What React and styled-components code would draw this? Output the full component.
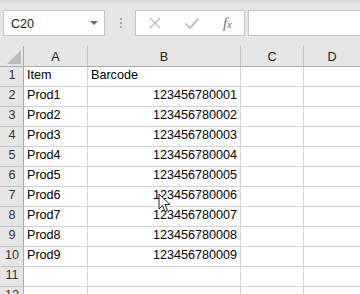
import React from 'react';
import styled, { createGlobalStyle } from 'styled-components';

const GlobalStyle = createGlobalStyle`
  html, body {
    margin: 0;
    padding: 0;
    background: #e6e6e6;
    overflow: hidden;
  }
`;

const rows = [
  ['Item', 'Barcode'],
  ['Prod1', '123456780001'],
  ['Prod2', '123456780002'],
  ['Prod3', '123456780003'],
  ['Prod4', '123456780004'],
  ['Prod5', '123456780005'],
  ['Prod6', '123456780006'],
  ['Prod7', '123456780007'],
  ['Prod8', '123456780008'],
  ['Prod9', '123456780009'],
  ['', ''],
  ['', ''],
];

const Sheet = () => {
  return (
    <Wrapper>
      <GlobalStyle />
      <FormulaBar>
        <NameBox>
          <span>C20</span>
          <Caret />
        </NameBox>
        <Grip>
          <i />
          <i />
          <i />
        </Grip>
        <FxButtons>
          <svg width="14" height="14" viewBox="0 0 14 14">
            <path d="M2 2 L12 12 M12 2 L2 12" stroke="#c3c3c3" strokeWidth="1.6" fill="none" />
          </svg>
          <svg width="16" height="14" viewBox="0 0 16 14">
            <path d="M1.5 7.5 L6 12 L14.5 2.5" stroke="#c3c3c3" strokeWidth="2" fill="none" />
          </svg>
          <Fx>
            f<sub>x</sub>
          </Fx>
        </FxButtons>
        <FormulaInput />
      </FormulaBar>

      <Grid>
        <Corner>
          <svg width="14" height="14" viewBox="0 0 14 14">
            <path d="M14 0 L14 14 L0 14 Z" fill="#bcbcbc" />
          </svg>
        </Corner>
        {['A', 'B', 'C', 'D'].map((c) => (
          <ColHead key={c} $last={c === 'D'}>{c}</ColHead>
        ))}
        {rows.map((r, i) => (
          <React.Fragment key={i}>
            <RowHead>{i + 1}</RowHead>
            <Cell>{r[0]}</Cell>
            <Cell $right={i > 0}>{r[1]}</Cell>
            <Cell />
            <Cell $last />
          </React.Fragment>
        ))}
      </Grid>

      <Pointer width="14" height="21" viewBox="0 0 14 21">
        <path
          d="M1 1 L1 16 L4.5 12.5 L7 18.5 L9.5 17.5 L7 11.5 L12 11.5 Z"
          fill="#fff"
          stroke="#222"
          strokeWidth="1"
          strokeLinejoin="round"
        />
      </Pointer>
    </Wrapper>
  );
};

const Wrapper = styled.div`
  position: relative;
  width: 360px;
  height: 294px;
  overflow: hidden;
  background: #e6e6e6;
  font-family: "Liberation Sans", Arial, sans-serif;
`;

const FormulaBar = styled.div`
  display: flex;
  align-items: stretch;
  height: 26px;
  padding: 10px 0 10px 3px;
  background: linear-gradient(#d8d8d8 0, #e6e6e6 4px);
`;

const NameBox = styled.div`
  box-sizing: border-box;
  width: 102px;
  display: flex;
  align-items: center;
  justify-content: space-between;
  padding: 0 6px 0 7px;
  background: #fff;
  border: 1px solid #c6c6c6;
  font-size: 12.6px;
  color: #222;
  span {
    padding-top: 1px;
  }
`;

const Caret = styled.div`
  width: 0;
  height: 0;
  border-left: 4px solid transparent;
  border-right: 4px solid transparent;
  border-top: 4px solid #6d6d6d;
`;

const Grip = styled.div`
  width: 30px;
  display: flex;
  flex-direction: column;
  align-items: center;
  justify-content: center;
  gap: 2px;
  padding-bottom: 1px;
  i {
    display: block;
    width: 2px;
    height: 2px;
    background: #a9a9a9;
    margin-left: 1px;
  }
`;

const FxButtons = styled.div`
  box-sizing: border-box;
  width: 110px;
  display: flex;
  align-items: center;
  justify-content: space-between;
  padding: 0 12px 0 12px;
  background: #fff;
  border: 1px solid #c6c6c6;
`;

const Fx = styled.span`
  font-family: "Liberation Serif", "Times New Roman", serif;
  font-style: italic;
  font-size: 15px;
  color: #6f6f6f;
  sub {
    font-size: 11px;
    vertical-align: 0;
    margin-left: 0;
  }
`;

const FormulaInput = styled.div`
  flex: 1;
  margin-left: 3px;
  background: #fff;
  border: 1px solid #c6c6c6;
  border-right: none;
`;

const Grid = styled.div`
  display: grid;
  grid-template-columns: 24px 64px 153px 63px 1fr;
  grid-auto-rows: 20px;
  grid-template-rows: 21px;
  background: #fff;
`;

const Corner = styled.div`
  box-sizing: border-box;
  background: #e6e6e6;
  border-right: 1px solid #ababab;
  border-bottom: 1px solid #ababab;
  display: flex;
  align-items: flex-end;
  justify-content: flex-end;
  padding: 0 2px 2px 0;
`;

const ColHead = styled.div`
  box-sizing: border-box;
  background: #e6e6e6;
  border-right: ${(p) => (p.$last ? 'none' : '1px solid #c4c4c4')};
  border-bottom: 1px solid #ababab;
  font-size: 12.6px;
  color: #222;
  display: flex;
  align-items: center;
  justify-content: center;
  padding-top: 1px;
`;

const RowHead = styled.div`
  box-sizing: border-box;
  background: #e6e6e6;
  border-right: 1px solid #ababab;
  border-bottom: 1px solid #c4c4c4;
  font-size: 12.6px;
  color: #333;
  display: flex;
  align-items: flex-end;
  justify-content: center;
  padding-bottom: 4px;
  padding-left: 1px;
`;

const Cell = styled.div`
  box-sizing: border-box;
  border-right: ${(p) => (p.$last ? 'none' : '1px solid #d4d4d4')};
  border-bottom: 1px solid #d4d4d4;
  font-size: 12.6px;
  color: #000;
  display: flex;
  align-items: flex-end;
  justify-content: ${(p) => (p.$right ? 'flex-end' : 'flex-start')};
  padding: 0 3px 4px 3px;
  white-space: nowrap;
`;

const Pointer = styled.svg`
  position: absolute;
  left: 158px;
  top: 193px;
`;

export default Sheet;
